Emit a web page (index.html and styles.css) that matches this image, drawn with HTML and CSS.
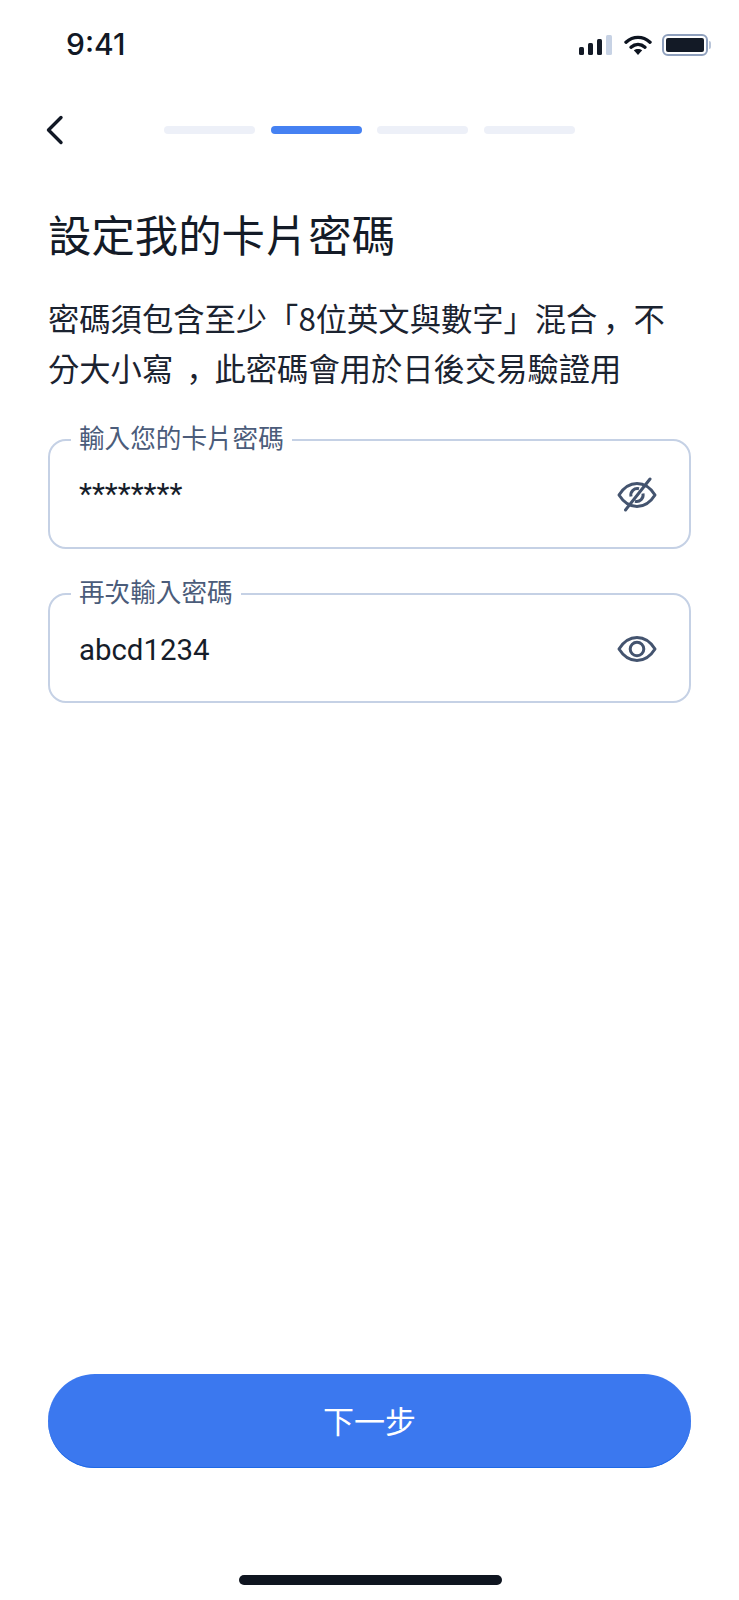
FILE: index.html
```html
<!DOCTYPE html>
<html lang="zh-Hant">
<head>
<meta charset="utf-8">
<title>設定我的卡片密碼</title>
<link rel="stylesheet" href="styles.css">
</head>
<body>
<div class="screen">
  <div class="status">
    <span class="time">9:41</span>
    <div class="status-icons">
      <svg class="sig" width="33" height="20" viewBox="0 0 33 20"><rect x="0" y="12" width="5" height="8" rx="1.5" fill="#131a26"/><rect x="9" y="8" width="5" height="12" rx="1.5" fill="#131a26"/><rect x="18" y="4" width="5" height="16" rx="1.5" fill="#131a26"/><rect x="27" y="0" width="6" height="20" rx="1.5" fill="#c7d2e4"/></svg>
      <svg class="wifi" width="28" height="20" viewBox="0 0 28 20"><path d="M2 7.2C9.200 .8 18.800 .8 26 7.200" fill="none" stroke="#0d1420" stroke-width="3.400" stroke-linecap="round"/><path d="M7 12.200C11.200 8.500 16.800 8.500 21 12.200" fill="none" stroke="#0d1420" stroke-width="3.400" stroke-linecap="round"/><path d="M9.800 15.300C12.200 13.400 15.800 13.400 18.200 15.300L14 20Z" fill="#0d1420"/></svg>
      <div class="battery"><div class="battery-body"><div class="battery-fill"></div></div><div class="battery-cap"></div></div>
    </div>
  </div>
  <div class="nav">
    <svg class="back" width="20" height="30" viewBox="0 0 20 30"><path d="M16 2.500L3.500 15L16 27.500" fill="none" stroke="#111825" stroke-width="3.400" stroke-linecap="round" stroke-linejoin="round"/></svg>
    <div class="steps">
      <span class="step"></span>
      <span class="step active"></span>
      <span class="step"></span>
      <span class="step"></span>
    </div>
  </div>
  <h1 class="title">設定我的卡片密碼</h1>
  <p class="desc">密碼須包含至少「8位英文與數字」混合<span class="punct">&#xFF0C;</span>不<br>分大小寫<span class="punct wide">&#xFF0C;</span>此密碼會用於日後交易驗證用</p>
  <fieldset class="field first">
    <legend class="label">輸入您的卡片密碼</legend>
    <div class="row">
      <span class="value mask">********</span>
      <svg class="eye" width="40" height="36" viewBox="0 0 40 36"><path d="M2 18C7 10 13 6.500 20 6.500S33 10 38 18C33 26 27 29.500 20 29.500S7 26 2 18Z" fill="none" stroke="#44546f" stroke-width="3" stroke-linejoin="round"/><path d="M14 19.500A6.500 6.500 0 0 1 22 11.800M26 16.500A6.500 6.500 0 0 1 18 24.200" fill="none" stroke="#44546f" stroke-width="3"/><path d="M8.500 33L33 2" stroke="#44546f" stroke-width="3" stroke-linecap="round"/></svg>
    </div>
  </fieldset>
  <fieldset class="field">
    <legend class="label">再次輸入密碼</legend>
    <div class="row">
      <span class="value">abcd1234</span>
      <svg class="eye" width="40" height="36" viewBox="0 0 40 36"><path d="M2 18C7 10 13 6.500 20 6.500S33 10 38 18C33 26 27 29.500 20 29.500S7 26 2 18Z" fill="none" stroke="#44546f" stroke-width="3" stroke-linejoin="round"/><circle cx="20" cy="18" r="6.800" fill="none" stroke="#44546f" stroke-width="3"/></svg>
    </div>
  </fieldset>
  <button class="next">下一步</button>
  <div class="home"></div>
</div>
</body>
</html>
```
FILE: styles.css
```css
* { box-sizing: border-box; }
html, body { margin: 0; padding: 0; background: #fff; }
body { font-family: "Noto Sans CJK TC", sans-serif; color: #141b27; }
.screen { width: 739px; height: 1600px; display: flex; flex-direction: column; padding: 0 48px; }
.status { height: 90px; display: flex; justify-content: space-between; align-items: center; margin-right: -20px; }
.time { font-family: "Inter", "Liberation Sans", sans-serif; font-size: 30px; line-height: 36px; font-weight: 500; margin: 0 0 2px 18px; color: #111825; }
.status-icons { display: flex; align-items: center; gap: 10px; }
.wifi { margin-left: 2px; }
.battery { display: flex; align-items: center; gap: 1px; }
.battery-body { width: 46px; height: 22px; border: 2px solid #8fa0bd; border-radius: 6px; padding: 2px; }
.battery-fill { width: 100%; height: 100%; background: #131a26; border-radius: 2px; }
.battery-cap { width: 2px; height: 8px; background: #b9c5d9; border-radius: 0 2px 2px 0; }
.nav { height: 80px; display: flex; align-items: center; }
.back { flex: none; margin-left: -3px; }
.steps { display: flex; gap: 15.700px; margin-left: 99px; }
.step { width: 91px; height: 8px; border-radius: 4px; background: #edf0f8; }
.step.active { background: #4581f2; }
.title { margin: 33px 0 0; font-size: 43.400px; line-height: 60px; font-weight: 400; }
.desc { margin: 30px 0 0; font-size: 31.300px; line-height: 50px; color: #1b2330; white-space: nowrap; }
.punct { font-family: "Noto Sans CJK SC", sans-serif; font-feature-settings: "palt"; display: inline-block; width: 1.15em; padding-left: .24em; }
.punct.wide { width: 1.32em; padding-left: .48em; }
.field { margin: 27px 0 0; padding: 0 32px 0 29px; height: 127px; min-width: 0; border: 2px solid #c5d1e5; border-radius: 18px; }
.field.first { margin-top: 29px; }
.label { font-size: 25.600px; line-height: 30px; padding: 0 8px 6px; margin-left: -8px; color: #4b5c7a; }
.row { display: flex; align-items: center; justify-content: space-between; height: 40px; margin-top: 17px; }
.value { font-size: 29.400px; line-height: 40px; color: #161d2a; font-family: "Roboto", sans-serif; margin-top: 2px; }
.mask { font-size: 30px; margin-top: -2px; }
.eye { flex: none; }
.next { margin-top: auto; height: 94px; border: 0; padding: 0 0 4px; border-radius: 47px; background: #3b78ef; box-shadow: inset 0 -1px 0 #1f69e6; color: #fff; font-size: 31px; font-family: "Noto Sans CJK TC", sans-serif; width: 100%; flex: none; }
.home { align-self: center; width: 263px; height: 10px; border-radius: 5px; background: #0f1520; margin: 107px 0 15px 2px; flex: none; }
```
